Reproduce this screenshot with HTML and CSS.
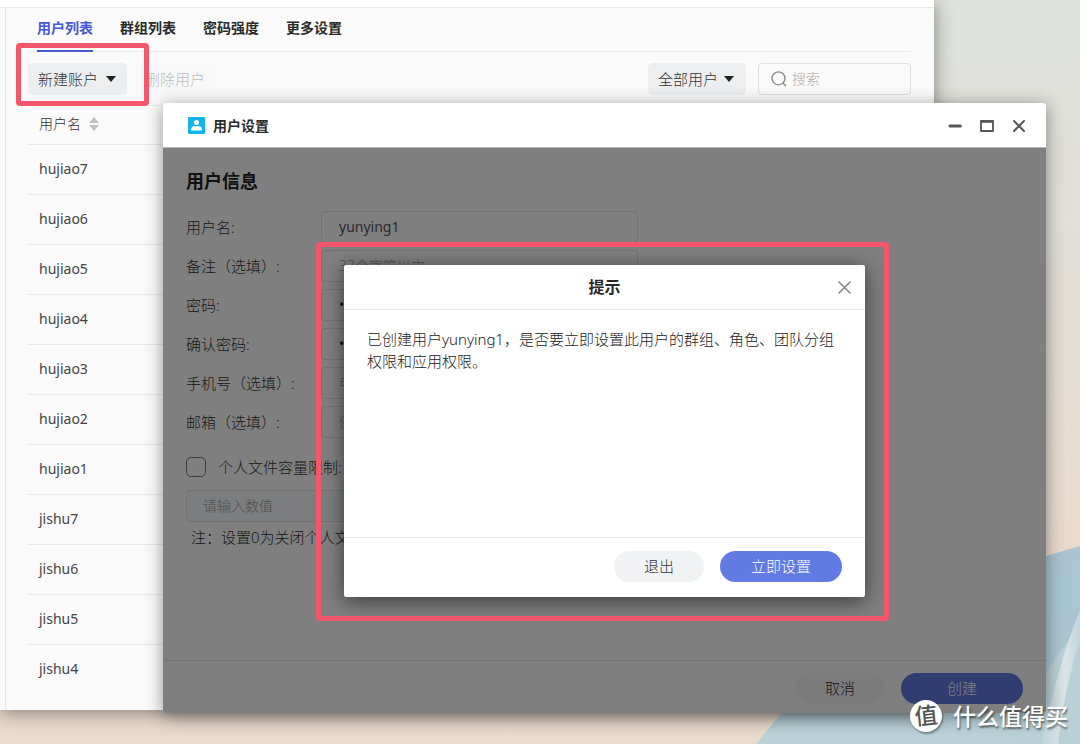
FILE: index.html
```html
<!DOCTYPE html>
<html lang="zh-CN">
<head>
<meta charset="utf-8">
<title>用户设置</title>
<link rel="stylesheet" href="styles.css">
</head>
<body>
<div class="desktop">
  <svg class="wallpaper" viewBox="0 0 1080 744" preserveAspectRatio="xMaxYMax slice" aria-hidden="true">
    <defs>
      <linearGradient id="sky" x1="0" y1="0" x2="0" y2="1">
        <stop offset="0" stop-color="#dfe1dc"/>
        <stop offset="0.3" stop-color="#e0dfd8"/>
        <stop offset="0.6" stop-color="#e6dcd1"/>
        <stop offset="0.75" stop-color="#ead9cb"/>
        <stop offset="1" stop-color="#eadacb"/>
      </linearGradient>
      <linearGradient id="sea" x1="0" y1="0" x2="0" y2="1">
        <stop offset="0" stop-color="#aac4d3"/>
        <stop offset="0.6" stop-color="#a9c6d2"/>
        <stop offset="1" stop-color="#bbd2d8"/>
      </linearGradient>
      <linearGradient id="fold" x1="0" y1="0" x2="1" y2="0">
        <stop offset="0" stop-color="#d6e1e4" stop-opacity="0.3"/>
        <stop offset="0.6" stop-color="#dbe5e7"/>
        <stop offset="1" stop-color="#c3d5db"/>
      </linearGradient>
    </defs>
    <rect width="1080" height="744" fill="url(#sky)"/>
    <path d="M756 744 Q780 714 830 660 Q930 575 1046 556 L1080 546 V744Z" fill="url(#sea)"/>
    <path d="M1080 624 L1046 672 L1010 744 H1080Z" fill="#b9d0d7"/>
    <path d="M1080 610 Q1056 670 1042 744 H1058 Q1064 690 1080 640Z" fill="url(#fold)"/>
  </svg>

  <main class="window users">
    <div class="strip"></div>
    <div class="users-body">
      <div class="side"></div>
      <section class="users-main">
        <nav class="tabs">
          <a class="tab active" href="#users">用户列表</a>
          <a class="tab" href="#groups">群组列表</a>
          <a class="tab" href="#strength">密码强度</a>
          <a class="tab" href="#more">更多设置</a>
        </nav>
        <div class="toolbar">
          <div class="marked mark-button">
            <button class="btn" type="button">新建账户<span class="caret"></span></button>
          </div>
          <button class="btn faded" type="button" disabled>删除用户</button>
          <div class="filter">
            <select class="btn" aria-label="用户范围"><option>全部用户</option></select>
            <span class="caret"></span>
          </div>
          <label class="search">
            <svg width="16" height="16" viewBox="0 0 16 16" fill="none" stroke="#888" stroke-width="1.3" stroke-linecap="round" aria-hidden="true"><circle cx="7.5" cy="7.3" r="6.5"/><path d="M12 12.2 14.6 14.6"/></svg>
            <input type="search" placeholder="搜索" aria-label="搜索">
          </label>
        </div>
        <table class="list">
          <thead><tr><th scope="col"><span class="sort">用户名
            <svg width="10" height="14" viewBox="0 0 10 14" fill="#c0c2c5" aria-hidden="true"><path d="M0 6 5 0l5 6zM0 8h10l-5 6z"/></svg></span></th></tr></thead>
          <tbody>
            <tr><td>hujiao7</td></tr>
            <tr><td>hujiao6</td></tr>
            <tr><td>hujiao5</td></tr>
            <tr><td>hujiao4</td></tr>
            <tr><td>hujiao3</td></tr>
            <tr><td>hujiao2</td></tr>
            <tr><td>hujiao1</td></tr>
            <tr><td>jishu7</td></tr>
            <tr><td>jishu6</td></tr>
            <tr><td>jishu5</td></tr>
            <tr><td>jishu4</td></tr>
          </tbody>
        </table>
      </section>
    </div>
  </main>

  <section class="window dialog" aria-label="用户设置">
    <header class="titlebar">
      <svg width="17" height="17" viewBox="0 0 17 17" aria-hidden="true"><rect width="17" height="17" rx="1" fill="#12b5ea"/><circle cx="8.5" cy="5.6" r="2.5" fill="#fff"/><path d="M3.2 13.6v-1.4c0-1.8 1.2-2.9 3-2.9h4.6c1.8 0 3 1.1 3 2.9v1.4z" fill="#fff"/></svg>
      <h1>用户设置</h1>
      <div class="controls">
        <button type="button" aria-label="最小化"><svg width="14" height="14" viewBox="0 0 14 14" fill="none" stroke="#555" stroke-width="3" stroke-linecap="round"><path d="M2 7h10.4"/></svg></button>
        <button type="button" aria-label="最大化"><svg width="14" height="14" viewBox="0 0 14 14" fill="none" stroke="#555"><path d="M1 2v10h12V2z" stroke-width="1.8" stroke-linejoin="round"/><path d="M.6 2.6h12.8" stroke-width="2.4"/></svg></button>
        <button type="button" aria-label="关闭"><svg width="14" height="14" viewBox="0 0 14 14" fill="none" stroke="#555" stroke-width="2" stroke-linecap="round"><path d="m2 2 10 10M12 2 2 12"/></svg></button>
      </div>
    </header>
    <div class="dialog-body">
      <form class="form">
        <h2>用户信息</h2>
        <div class="fields">
          <label for="name">用户名:</label><input id="name" type="text" value="yunying1">
          <label for="note">备注（选填）:</label><input id="note" type="text" placeholder="32个字符以内">
          <label for="pwd">密码:</label><input id="pwd" type="password" value="12345678">
          <label for="pwd2">确认密码:</label><input id="pwd2" type="password" value="12345678">
          <label for="phone">手机号（选填）:</label><input id="phone" type="text" placeholder="电话号码">
          <label for="mail">邮箱（选填）:</label><input id="mail" type="text" placeholder="例如邮箱">
        </div>
        <label class="quota"><input type="checkbox"><span>个人文件容量限制:</span></label>
        <input class="amount" type="text" placeholder="请输入数值" aria-label="容量数值" disabled>
        <p class="hint">注：设置0为关闭个人文件容量限制</p>
      </form>
      <footer class="actions dialog-actions">
        <button class="pill" type="button">取消</button>
        <button class="pill primary" type="button">创建</button>
      </footer>
      <div class="overlay">
        <div class="marked mark-prompt" role="alertdialog" aria-labelledby="prompt-title">
          <div class="prompt">
            <header class="prompt-head">
              <h2 id="prompt-title">提示</h2>
              <button type="button" aria-label="关闭"><svg width="13" height="13" viewBox="0 0 13 13" fill="none" stroke="#8a8a8a" stroke-width="1.7" stroke-linecap="round"><path d="m1 1 11 11M12 1 1 12"/></svg></button>
            </header>
            <p class="message">已创建用户yunying1，是否要立即设置此用户的群组、角色、团队分组权限和应用权限。</p>
            <footer class="actions">
              <button class="pill" type="button">退出</button>
              <button class="pill primary" type="button">立即设置</button>
            </footer>
          </div>
        </div>
      </div>
    </div>
  </section>

  <div class="watermark"><span class="badge"><span class="glyph">值</span></span><span>什么值得买</span></div>
</div>
</body>
</html>
```

FILE: styles.css
```css
* { box-sizing: border-box; }

body {
  margin: 0;
  color: #333;
  font: 300 15px/22px "Noto Sans", "Noto Sans CJK SC", sans-serif;
}

h1, h2, p { margin: 0; }
button, input, select { font: inherit; color: inherit; }
button { border: 0; padding: 0; background: none; }

.desktop {
  position: relative;
  min-height: 100vh;
  overflow: hidden;
}

.wallpaper {
  position: absolute;
  inset: 0;
  width: 100%;
  height: 100%;
}

.window { position: absolute; }

/* user list window */
.users {
  inset: 0 146px auto 0;
  background: #fafafa;
  box-shadow: 0 3px 18px rgba(0, 0, 0, .42);
}

.strip {
  height: 8px;
  background: #fff;
  border-bottom: 1px solid #e8e8e8;
}

.users-body { display: flex; }
.side { width: 6px; border-right: 1px solid #e4e4e4; }
.users-main { flex: 1; padding: 0 23px 15px 22px; }

.tabs {
  display: flex;
  gap: 27px;
  padding-left: 9px;
  border-bottom: 1px solid #ececec;
}

.tab {
  height: 44px;
  margin-bottom: -1px;
  padding-top: 9px;
  border-bottom: 2px solid transparent;
  color: #2a2a2a;
  font-size: 14px;
  font-weight: 700;
  text-decoration: none;
}

.tab.active { color: #4659d2; border-color: #4659d2; }

.toolbar {
  display: flex;
  gap: 8px;
  margin-top: 11px;
}

.btn {
  display: flex;
  align-items: center;
  gap: 8px;
  height: 32px;
  padding: 0 11px 1px 10px;
  border: 0;
  border-radius: 5px;
  background: #eceeef;
  appearance: none;
}

.faded { background: #f8f8f8; color: #bdbdbd; }

.caret {
  border: 5px solid transparent;
  border-top: 6px solid #222;
  border-bottom: 0;
}

.filter {
  position: relative;
  margin-left: auto;
}

.filter .btn { width: 98px; }

.filter .caret {
  position: absolute;
  right: 12px;
  top: 13px;
  pointer-events: none;
}

.search {
  display: flex;
  align-items: center;
  gap: 5px;
  width: 153px;
  margin-left: 4px;
  padding: 0 12px;
  border: 1px solid #dedfe1;
  border-radius: 4px;
}

.search svg { flex: none; }

.search input {
  width: 100%;
  min-width: 0;
  padding: 0;
  border: 0;
  outline: 0;
  background: none;
  font-size: 14px;
}

::placeholder { color: #aaa; opacity: 1; }

.list {
  width: 100%;
  margin-top: 10px;
  border-collapse: collapse;
  border-top: 1px solid #ececec;
}

.list th, .list td {
  height: 50px;
  padding: 0 11px 2px;
  border-bottom: 1px solid #e9e9e9;
  text-align: left;
}

.list td { color: #444; font-size: 14px; font-weight: 400; }
.list th { height: 39px; font-size: 14px; font-weight: 300; }
.list tr:last-child td { border-bottom: 0; }
.list thead tr:last-child th { border-bottom: 1px solid #e9e9e9; }

.sort { display: flex; align-items: center; gap: 8px; }

/* user settings dialog */
.dialog {
  inset: 103px 34px auto 163px;
  border-radius: 3px;
  background: #fff;
  box-shadow: 0 3px 18px rgba(0, 0, 0, .42);
}

.titlebar {
  display: flex;
  align-items: center;
  gap: 8px;
  height: 45px;
  padding: 1px 20px 0 25px;
  border-bottom: 1px solid #b5b8b4;
}

.titlebar h1 { color: #2a2a2a; font-size: 14px; font-weight: 700; }

.controls { display: flex; gap: 18px; margin-left: auto; }
.controls button { display: flex; }

.dialog-body {
  position: relative;
  color: #333;
}

.form {
  display: flex;
  flex-direction: column;
  align-items: flex-start;
  min-height: 512px;
  padding: 21px 23px;
}

.form h2 { color: #222; font-size: 18px; font-weight: 700; line-height: 24px; }

.fields {
  display: grid;
  grid-template-columns: 135px 317px;
  gap: 7px 0;
  align-items: center;
  margin-top: 18px;
}

.fields input, .amount {
  height: 32px;
  padding: 0 17px 1px;
  border: 1px solid #e4e4e4;
  border-radius: 4px;
  background: none;
  font-size: 14px;
}

.fields input { color: #555; font-weight: 400; }
.fields input[type="password"] { color: #222; }
.form ::placeholder { font-weight: 300; color: #a4a4a4; }

.quota {
  display: flex;
  align-items: center;
  gap: 12px;
  margin-top: 18px;
}

.quota input {
  width: 20px;
  height: 20px;
  margin: 0;
  border: 1px solid #777;
  border-radius: 5px;
  appearance: none;
}

.amount {
  width: 317px;
  margin-top: 12px;
  padding-left: 16px;
  background: #f6fafc;
}

.hint { margin: 4px 0 0 5px; }

.actions {
  display: flex;
  justify-content: flex-end;
  gap: 16px;
  padding: 13px 23px 15px;
  border-top: 1px solid #e9e9e9;
}

.dialog-actions {
  padding-top: 12px;
  padding-bottom: 9px;
}

.pill {
  min-width: 90px;
  height: 31px;
  padding-bottom: 1px;
  border-radius: 16px;
  background: #f0f2f3;
}

.dialog-actions .pill { background: #f7f7f8; }

.pill.primary {
  min-width: 122px;
  background: #607be2;
  color: #fff;
}

.overlay {
  position: absolute;
  inset: 0;
  display: flex;
  align-items: center;
  justify-content: center;
  border-radius: 0 0 3px 3px;
  background: rgba(0, 0, 0, .5);
}

.prompt {
  display: flex;
  flex-direction: column;
  width: 521px;
  min-height: 332px;
  border-radius: 2px;
  background: #fff;
  box-shadow: 0 4px 20px rgba(0, 0, 0, .55);
}

.prompt-head {
  display: grid;
  grid-template-columns: 1fr auto 1fr;
  align-items: center;
  height: 45px;
  padding: 1px 14px 0;
  border-bottom: 1px solid #e6e6e6;
}

.prompt-head h2 { grid-column: 2; color: #2a2a2a; font-size: 16px; font-weight: 700; }
.prompt-head button { display: flex; justify-self: end; }

.message {
  flex: 1;
  padding: 18px 23px;
  color: #222;
}

/* red callouts */
.marked { position: relative; }

.marked::after {
  content: "";
  position: absolute;
  border: 5px solid #f4566a;
  border-radius: 4px;
  pointer-events: none;
}

.mark-button::after { inset: -20px -22px -11px -12px; z-index: 1; }
.mark-prompt::after { inset: -23px -24px -24px -28px; }

.watermark {
  position: absolute;
  right: 12px;
  bottom: 12px;
  display: flex;
  align-items: center;
  gap: 11px;
  color: #fff;
  font-size: 23px;
  font-weight: 500;
  line-height: 32px;
  text-shadow: 1px 2px 2px rgba(0, 0, 0, .5);
}

.badge {
  width: 32px;
  height: 32px;
  border-radius: 50%;
  background: #fff;
  box-shadow: 1px 2px 2px rgba(0, 0, 0, .35);
  color: #555;
  line-height: 30px;
  text-align: center;
  text-shadow: none;
}

.glyph {
  display: block;
  transform: rotate(-6deg);
}
```
